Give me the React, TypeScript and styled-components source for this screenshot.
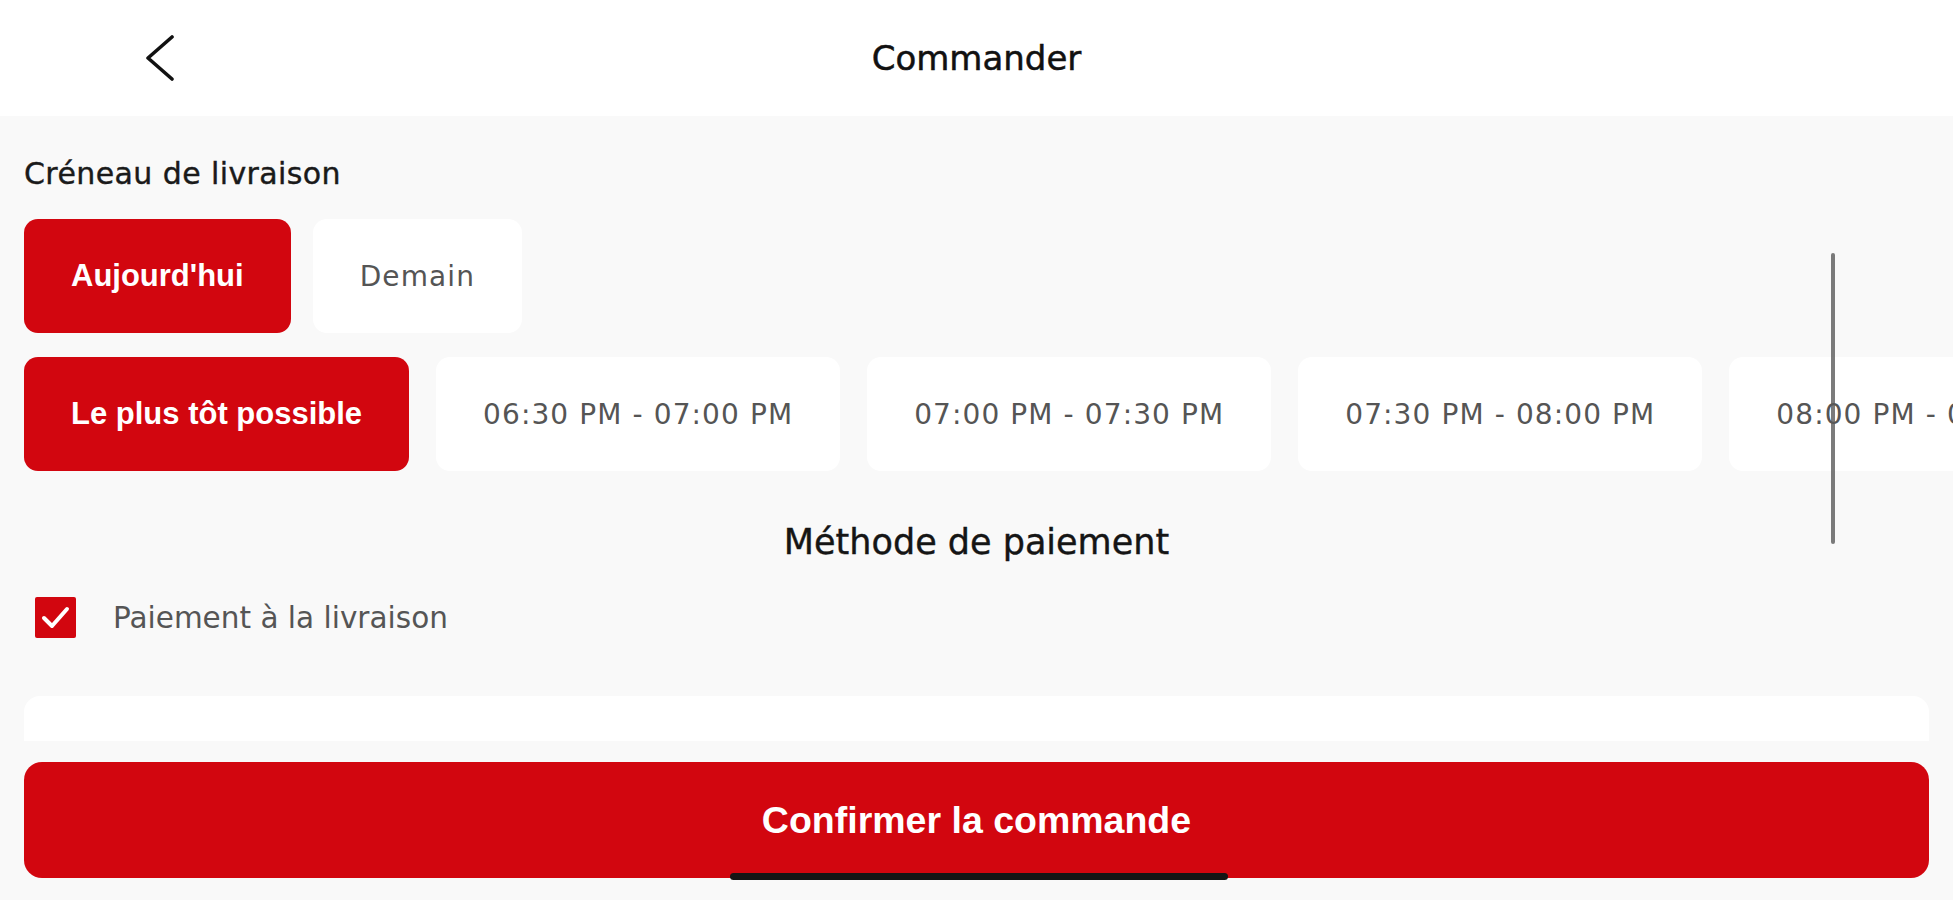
import styled, { createGlobalStyle } from 'styled-components';

const RED = '#d2060f';

const GlobalStyle = createGlobalStyle`
	html, body {
		margin: 0;
		padding: 0;
		background: #f9f9f9;
	}
	body {
		font-family: 'DejaVu Sans', sans-serif;
		overflow: hidden;
	}
	* {
		box-sizing: border-box;
	}
`;

const Page = styled.div`
	height: 100vh;
	display: flex;
	flex-direction: column;
	background: #f9f9f9;
	position: relative;
`;

const Header = styled.header`
	height: 116px;
	flex-shrink: 0;
	background: #ffffff;
	display: grid;
	grid-template-columns: 1fr auto 1fr;
	align-items: center;
`;

const BackButton = styled.button`
	justify-self: start;
	margin-left: 145px;
	padding: 0;
	border: none;
	background: none;
	display: flex;
	align-items: center;
`;

const Title = styled.h1`
	margin: 0;
	font-family: 'DejaVu Sans', sans-serif;
	font-size: 34px;
	font-weight: 400;
	color: #111;
	-webkit-text-stroke: 0.5px #111;
`;

const Scroll = styled.main`
	flex: 1;
	overflow: hidden;
	position: relative;
	padding: 40px 0 0 24px;
`;

const SectionLabel = styled.div`
	font-size: 30px;
	line-height: 35px;
	letter-spacing: 0.4px;
	color: #1a1a1a;
	-webkit-text-stroke: 0.4px #1a1a1a;
`;

const ChipRow = styled.div<{ $first?: boolean }>`
	display: flex;
	gap: ${(p) => (p.$first ? '22px' : '27px')};
	margin-top: ${(p) => (p.$first ? '28px' : '24px')};
	overflow: hidden;
	white-space: nowrap;
`;

const Chip = styled.div<{ $active?: boolean }>`
	flex-shrink: 0;
	height: 114px;
	padding: 0 47px;
	border-radius: 14px;
	display: flex;
	align-items: center;
	justify-content: center;
	background: ${(p) => (p.$active ? RED : '#ffffff')};
	color: ${(p) => (p.$active ? '#ffffff' : '#555555')};
	font-family: ${(p) => (p.$active ? "'Liberation Sans', Arial, sans-serif" : "'DejaVu Sans', sans-serif")};
	font-weight: ${(p) => (p.$active ? 700 : 400)};
	font-size: ${(p) => (p.$active ? '31px' : '28px')};
	letter-spacing: ${(p) => (p.$active ? '0' : '1.1px')};
`;

const SubTitle = styled.h2`
	margin: 51px 24px 0 0;
	text-align: center;
	font-size: 35px;
	line-height: 40px;
	font-weight: 400;
	color: #151515;
	-webkit-text-stroke: 0.4px #151515;
`;

const CheckRow = styled.label`
	display: flex;
	align-items: center;
	gap: 37px;
	margin: 35px 0 0 11px;
	font-size: 29.5px;
	color: #555555;
`;

const Card = styled.div`
	margin: 58px 24px 0 0;
	height: 200px;
	background: #ffffff;
	border-radius: 16px;
`;

const ScrollIndicator = styled.div`
	position: absolute;
	top: 137px;
	right: 118px;
	width: 4px;
	height: 291px;
	border-radius: 2px;
	background: rgba(90, 90, 90, 0.8);
`;

const Footer = styled.footer`
	flex-shrink: 0;
	padding: 21px 24px 22px;
	background: #f9f9f9;
`;

const ConfirmButton = styled.button`
	width: 100%;
	height: 116px;
	border: none;
	border-radius: 18px;
	background: ${RED};
	color: #ffffff;
	font-family: 'Liberation Sans', Arial, sans-serif;
	font-weight: 700;
	font-size: 37.5px;
`;

const HomeIndicator = styled.div`
	position: absolute;
	left: 50%;
	bottom: 20px;
	width: 498px;
	height: 7px;
	margin-left: -247px;
	border-radius: 4px;
	background: #151515;
`;

const slots = [
	'06:30 PM - 07:00 PM',
	'07:00 PM - 07:30 PM',
	'07:30 PM - 08:00 PM',
	'08:00 PM - 08:30 PM',
];

export default function App() {
	return (
		<Page>
			<GlobalStyle />
			<Header>
				<BackButton aria-label="Retour">
					<svg width="30" height="46" viewBox="0 0 30 46" fill="none">
						<path d="M27 2 L3 23 L27 44" stroke="#111" strokeWidth="3.6" strokeLinecap="round" strokeLinejoin="round" />
					</svg>
				</BackButton>
				<Title>Commander</Title>
				<div />
			</Header>
			<Scroll>
				<SectionLabel>Créneau de livraison</SectionLabel>
				<ChipRow $first>
					<Chip $active>Aujourd'hui</Chip>
					<Chip>Demain</Chip>
				</ChipRow>
				<ChipRow>
					<Chip $active>Le plus tôt possible</Chip>
					{slots.map((s) => (
						<Chip key={s}>{s}</Chip>
					))}
				</ChipRow>
				<SubTitle>Méthode de paiement</SubTitle>
				<CheckRow>
					<svg width="41" height="41" viewBox="0 0 41 41">
						<rect width="41" height="41" rx="2" fill={RED} />
						<path d="M9 21 L17 29 L32 12" stroke="#fff" strokeWidth="4" fill="none" strokeLinecap="round" strokeLinejoin="round" />
					</svg>
					Paiement à la livraison
				</CheckRow>
				<Card />
				<ScrollIndicator />
			</Scroll>
			<Footer>
				<ConfirmButton>Confirmer la commande</ConfirmButton>
			</Footer>
			<HomeIndicator />
		</Page>
	);
}
